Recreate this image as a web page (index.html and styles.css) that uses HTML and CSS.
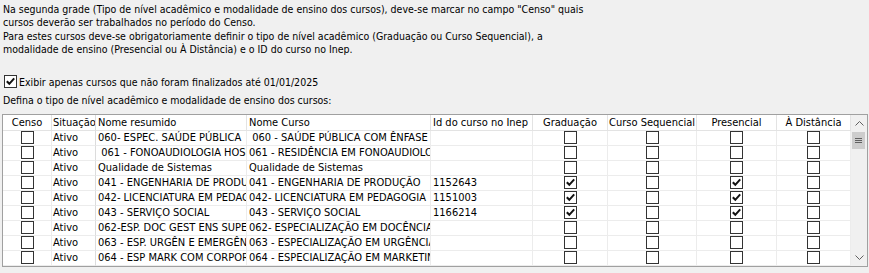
FILE: index.html
```html
<!DOCTYPE html>
<html>
<head>
  <meta charset="utf-8">
  <title>Cursos - Censo</title>
  <link rel="stylesheet" href="styles.css">
</head>
<body>
  <div class="intro">
    <p>Na segunda grade (Tipo de nível acadêmico e modalidade de ensino dos cursos), deve-se marcar no campo "Censo" quais<br>cursos deverão ser trabalhados no período do Censo.</p>
    <p>Para estes cursos deve-se obrigatoriamente definir o tipo de nível acadêmico (Graduação ou Curso Sequencial), a<br>modalidade de ensino (Presencial ou À Distância) e o ID do curso no Inep.</p>
  </div>

  <div class="filter">
    <span class="cb checked"><svg viewBox="0 0 11 11"><path d="M1.8 5.2 L4.3 7.8 L9.2 2.4"/></svg></span>
    <span>Exibir apenas cursos que não foram finalizados até 01/01/2025</span>
  </div>

  <div class="caption">Defina o tipo de nível acadêmico e modalidade de ensino dos cursos:</div>

  <div class="grid">
    <div class="grid-table">
      <div class="row head">
        <div class="cell center">Censo</div>
        <div class="cell">Situação</div>
        <div class="cell">Nome resumido</div>
        <div class="cell">Nome Curso</div>
        <div class="cell">Id do curso no Inep</div>
        <div class="cell center">Graduação</div>
        <div class="cell center">Curso Sequencial</div>
        <div class="cell center">Presencial</div>
        <div class="cell center">À Distância</div>
      </div>

      <div class="row">
        <div class="cell center"><span class="cb"></span></div>
        <div class="cell">Ativo</div>
        <div class="cell">060- ESPEC. SAÚDE PÚBLICA</div>
        <div class="cell">&nbsp;060 - SAÚDE PÚBLICA COM ÊNFASE NA SAÚDE DA FAMÍLIA</div>
        <div class="cell"></div>
        <div class="cell center"><span class="cb"></span></div>
        <div class="cell center"><span class="cb"></span></div>
        <div class="cell center"><span class="cb"></span></div>
        <div class="cell center"><span class="cb"></span></div>
      </div>

      <div class="row">
        <div class="cell center"><span class="cb"></span></div>
        <div class="cell">Ativo</div>
        <div class="cell">&nbsp;061 - FONOAUDIOLOGIA HOSPITALAR</div>
        <div class="cell">061 - RESIDÊNCIA EM FONOAUDIOLOGIA</div>
        <div class="cell"></div>
        <div class="cell center"><span class="cb"></span></div>
        <div class="cell center"><span class="cb"></span></div>
        <div class="cell center"><span class="cb"></span></div>
        <div class="cell center"><span class="cb"></span></div>
      </div>

      <div class="row">
        <div class="cell center"><span class="cb"></span></div>
        <div class="cell">Ativo</div>
        <div class="cell">Qualidade de Sistemas</div>
        <div class="cell">Qualidade de Sistemas</div>
        <div class="cell"></div>
        <div class="cell center"><span class="cb"></span></div>
        <div class="cell center"><span class="cb"></span></div>
        <div class="cell center"><span class="cb"></span></div>
        <div class="cell center"><span class="cb"></span></div>
      </div>

      <div class="row">
        <div class="cell center"><span class="cb"></span></div>
        <div class="cell">Ativo</div>
        <div class="cell">041 - ENGENHARIA DE PRODUÇÃO</div>
        <div class="cell">041 - ENGENHARIA DE PRODUÇÃO</div>
        <div class="cell">1152643</div>
        <div class="cell center"><span class="cb checked"><svg viewBox="0 0 11 11"><path d="M1.8 5.2 L4.3 7.8 L9.2 2.4"/></svg></span></div>
        <div class="cell center"><span class="cb"></span></div>
        <div class="cell center"><span class="cb checked"><svg viewBox="0 0 11 11"><path d="M1.8 5.2 L4.3 7.8 L9.2 2.4"/></svg></span></div>
        <div class="cell center"><span class="cb"></span></div>
      </div>

      <div class="row">
        <div class="cell center"><span class="cb"></span></div>
        <div class="cell">Ativo</div>
        <div class="cell">042- LICENCIATURA EM PEDAGOGIA</div>
        <div class="cell">042- LICENCIATURA EM PEDAGOGIA</div>
        <div class="cell">1151003</div>
        <div class="cell center"><span class="cb checked"><svg viewBox="0 0 11 11"><path d="M1.8 5.2 L4.3 7.8 L9.2 2.4"/></svg></span></div>
        <div class="cell center"><span class="cb"></span></div>
        <div class="cell center"><span class="cb checked"><svg viewBox="0 0 11 11"><path d="M1.8 5.2 L4.3 7.8 L9.2 2.4"/></svg></span></div>
        <div class="cell center"><span class="cb"></span></div>
      </div>

      <div class="row">
        <div class="cell center"><span class="cb"></span></div>
        <div class="cell">Ativo</div>
        <div class="cell">043 - SERVIÇO SOCIAL</div>
        <div class="cell">043 - SERVIÇO SOCIAL</div>
        <div class="cell">1166214</div>
        <div class="cell center"><span class="cb checked"><svg viewBox="0 0 11 11"><path d="M1.8 5.2 L4.3 7.8 L9.2 2.4"/></svg></span></div>
        <div class="cell center"><span class="cb"></span></div>
        <div class="cell center"><span class="cb checked"><svg viewBox="0 0 11 11"><path d="M1.8 5.2 L4.3 7.8 L9.2 2.4"/></svg></span></div>
        <div class="cell center"><span class="cb"></span></div>
      </div>

      <div class="row">
        <div class="cell center"><span class="cb"></span></div>
        <div class="cell">Ativo</div>
        <div class="cell">062-ESP. DOC GEST ENS SUPERIOR</div>
        <div class="cell">062- ESPECIALIZAÇÃO EM DOCÊNCIA E GESTÃO</div>
        <div class="cell"></div>
        <div class="cell center"><span class="cb"></span></div>
        <div class="cell center"><span class="cb"></span></div>
        <div class="cell center"><span class="cb"></span></div>
        <div class="cell center"><span class="cb"></span></div>
      </div>

      <div class="row">
        <div class="cell center"><span class="cb"></span></div>
        <div class="cell">Ativo</div>
        <div class="cell">063 - ESP. URGÊN E EMERGÊNCIA</div>
        <div class="cell">063 - ESPECIALIZAÇÃO EM URGÊNCIA E EMERGÊNCIA</div>
        <div class="cell"></div>
        <div class="cell center"><span class="cb"></span></div>
        <div class="cell center"><span class="cb"></span></div>
        <div class="cell center"><span class="cb"></span></div>
        <div class="cell center"><span class="cb"></span></div>
      </div>

      <div class="row">
        <div class="cell center"><span class="cb"></span></div>
        <div class="cell">Ativo</div>
        <div class="cell">064 - ESP MARK COM CORPORATIVO</div>
        <div class="cell">064 - ESPECIALIZAÇÃO EM MARKETING</div>
        <div class="cell"></div>
        <div class="cell center"><span class="cb"></span></div>
        <div class="cell center"><span class="cb"></span></div>
        <div class="cell center"><span class="cb"></span></div>
        <div class="cell center"><span class="cb"></span></div>
      </div>
    </div>

    <div class="vscroll">
      <div class="sb-btn"><svg viewBox="0 0 9 5"><path d="M0.5 4.5 L4.5 0.5 L8.5 4.5"/></svg></div>
      <div class="sb-thumb"><svg viewBox="0 0 7 7"><path d="M0 1.5 H7 M0 3.5 H7 M0 5.5 H7"/></svg></div>
      <div class="sb-track"></div>
      <div class="sb-btn"><svg viewBox="0 0 9 5"><path d="M0.5 0.5 L4.5 4.5 L8.5 0.5"/></svg></div>
    </div>
  </div>
</body>
</html>
```

FILE: styles.css
```css
body {
  width: 869px;
  height: 273px;
  margin: 0;
  padding: 0;
  background: #f0f0f0;
  color: #000;
  font-family: "DejaVu Sans Condensed", "DejaVu Sans", sans-serif;
  font-stretch: condensed;
  font-size: 11px;
  overflow: hidden;
}

.intro,
.filter,
.caption {
  font-size: 10.5px;
}

.intro {
  padding: 3px 0 0 3px;
}

.intro p {
  margin: 0 0 1px 0;
  line-height: 13px;
  white-space: nowrap;
}

.filter {
  display: flex;
  align-items: center;
  gap: 2px;
  height: 13px;
  margin: 19px 0 0 4px;
}

.caption {
  margin: 6px 0 0 3px;
  line-height: 12px;
}

/* Grid */
.grid {
  display: flex;
  width: 864px;
  margin: 8px 0 0 2px;
  border: 1px solid #a0a0a0;
  background: #fff;
}

.grid-table {
  width: 848px;
  flex-shrink: 0;
}

.row {
  display: grid;
  grid-template-columns: 49px 44px 151px 184px 102px 75px 89px 80px 74px;
  height: 15px;
}

.row.head {
  height: 16px;
}

.cell {
  box-sizing: border-box;
  border-right: 1px solid #ececec;
  border-bottom: 1px solid #ececec;
  padding: 0 2px;
  line-height: 14px;
  white-space: nowrap;
  overflow: hidden;
  display: flex;
  align-items: center;
}

.cell.center {
  justify-content: center;
  padding: 0;
}

.head .cell {
  line-height: 15px;
  border-right-color: #e3e3e3;
  border-bottom-color: #e3e3e3;
}

.row:not(.head) .cell {
  align-items: flex-start;
}

.row .cell:nth-child(2) {
  padding-left: 1px;
  border-right-color: #dcdcdc;
}

/* Checkboxes */
.cb {
  display: inline-flex;
  align-items: center;
  justify-content: center;
  width: 13px;
  height: 13px;
  box-sizing: border-box;
  border: 1px solid #333;
  background: #fff;
  flex-shrink: 0;
}

.cb svg {
  width: 11px;
  height: 11px;
}

.cb path {
  fill: none;
  stroke: #111;
  stroke-width: 2;
}

/* Vertical scrollbar */
.vscroll {
  width: 16px;
  display: flex;
  flex-direction: column;
  background: #f0f0f0;
}

.sb-btn {
  height: 17px;
  display: flex;
  align-items: center;
  justify-content: center;
}

.sb-btn svg {
  width: 9px;
  height: 5px;
}

.sb-btn path {
  fill: none;
  stroke: #606060;
  stroke-width: 1;
}

.sb-thumb {
  height: 17px;
  margin: 0 2px 0 1px;
  background: #cdcdcd;
  display: flex;
  align-items: center;
  justify-content: center;
}

.sb-thumb svg {
  width: 7px;
  height: 7px;
}

.sb-thumb path {
  stroke: #606060;
  stroke-width: 1;
}

.sb-track {
  flex: 1;
}
```
